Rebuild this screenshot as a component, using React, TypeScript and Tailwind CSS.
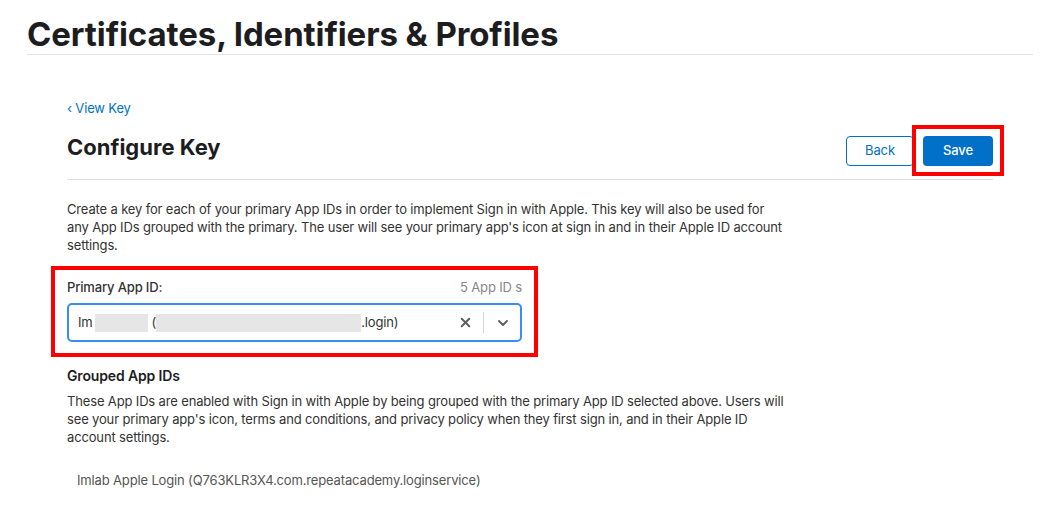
import { X, ChevronDown } from "lucide-react";

export default function App() {
  return (
    <div
      className="min-h-screen bg-white px-[27px] pt-[14px] text-[#333]"
      style={{ fontFamily: "Inter, 'Liberation Sans', sans-serif" }}
    >
      <h1 className="text-[33px] font-bold leading-[40px] tracking-[-0.1px] text-[#1d1d1f]">
        Certificates, Identifiers &amp; Profiles
      </h1>
      <div className="border-b border-[#e3e3e3]" />

      <div className="px-[40px] tracking-[-0.15px]">
        <a className="mt-[44px] block text-[13px] leading-[18px] text-[#0070c9]">
          ‹ View Key
        </a>

        <div className="flex items-start justify-between border-b border-[#dedede] pb-[13px] pt-[19px]">
          <h2 className="-mt-[1px] text-[22px] font-bold leading-[24px] tracking-normal text-[#1d1d1f]">
            Configure Key
          </h2>
          <div className="flex gap-[9px]">
            <button className="h-[30px] w-[68px] rounded-[4px] border border-[#0070c9] text-[13px] text-[#0070c9]">
              Back
            </button>
            <div className="relative">
              <button className="h-[30px] w-[70px] rounded-[4px] bg-[#0070c9] text-[13px] font-medium text-white">
                Save
              </button>
              <div className="pointer-events-none absolute -bottom-[10px] -left-[11px] -right-[11px] -top-[11px] border-4 border-[#ff0000]" />
            </div>
          </div>
        </div>

        <p className="mt-[20px] max-w-[718px] text-[13px] leading-[18px]">
          Create a key for each of your primary App IDs in order to implement Sign in with Apple. This key will also be
          used for any App IDs grouped with the primary. The user will see your primary app's icon at sign in and in their
          Apple ID account settings.
        </p>

        <div className="relative mt-[24px] w-[455px]">
          <div className="pointer-events-none absolute -bottom-[15px] -left-[16px] -right-[16px] -top-[12px] border-4 border-[#ff0000]" />
          <div className="flex items-center justify-between text-[13px] leading-[18px]">
            <span className="font-medium text-[#333]">Primary App ID:</span>
            <span className="text-[#86868b]">5 App ID s</span>
          </div>
          <div className="mt-[7px] flex h-[39px] items-center rounded-[5px] border-2 border-[#3a8bf2] pl-[9px] pr-[6px] text-[13px] text-[#333]">
            <span className="shrink-0">Im</span>
            <span className="ml-[2px] inline-block h-[18px] w-[53px] shrink-0 bg-[#e6e6e6]" />
            <span className="ml-[4px] shrink-0">(</span>
            <span className="inline-block h-[18px] w-[205px] shrink-0 bg-[#e6e6e6]" />
            <span className="shrink-0">.login)</span>
            <div className="ml-auto flex items-center">
              <X size={15} strokeWidth={3.2} className="mr-[10px] text-[#5f5f5f]" />
              <span className="h-[21px] w-px bg-[#d6d6d6]" />
              <ChevronDown size={16} strokeWidth={2.8} className="ml-[11px] mr-[3px] text-[#5f5f5f]" />
            </div>
          </div>
        </div>

        <h3 className="mt-[25px] text-[14px] font-semibold leading-[18px] text-[#1d1d1f]">Grouped App IDs</h3>
        <p className="mt-[7px] max-w-[726px] text-[13px] leading-[18px]">
          These App IDs are enabled with Sign in with Apple by being grouped with the primary App ID selected above. Users
          will see your primary app's icon, terms and conditions, and privacy policy when they first sign in, and in their
          Apple ID account settings.
        </p>

        <div className="mt-[25px] pl-[10px] text-[13px] leading-[18px] text-[#555]">
          Imlab Apple Login (Q763KLR3X4.com.repeatacademy.loginservice)
        </div>
      </div>
    </div>
  );
}
